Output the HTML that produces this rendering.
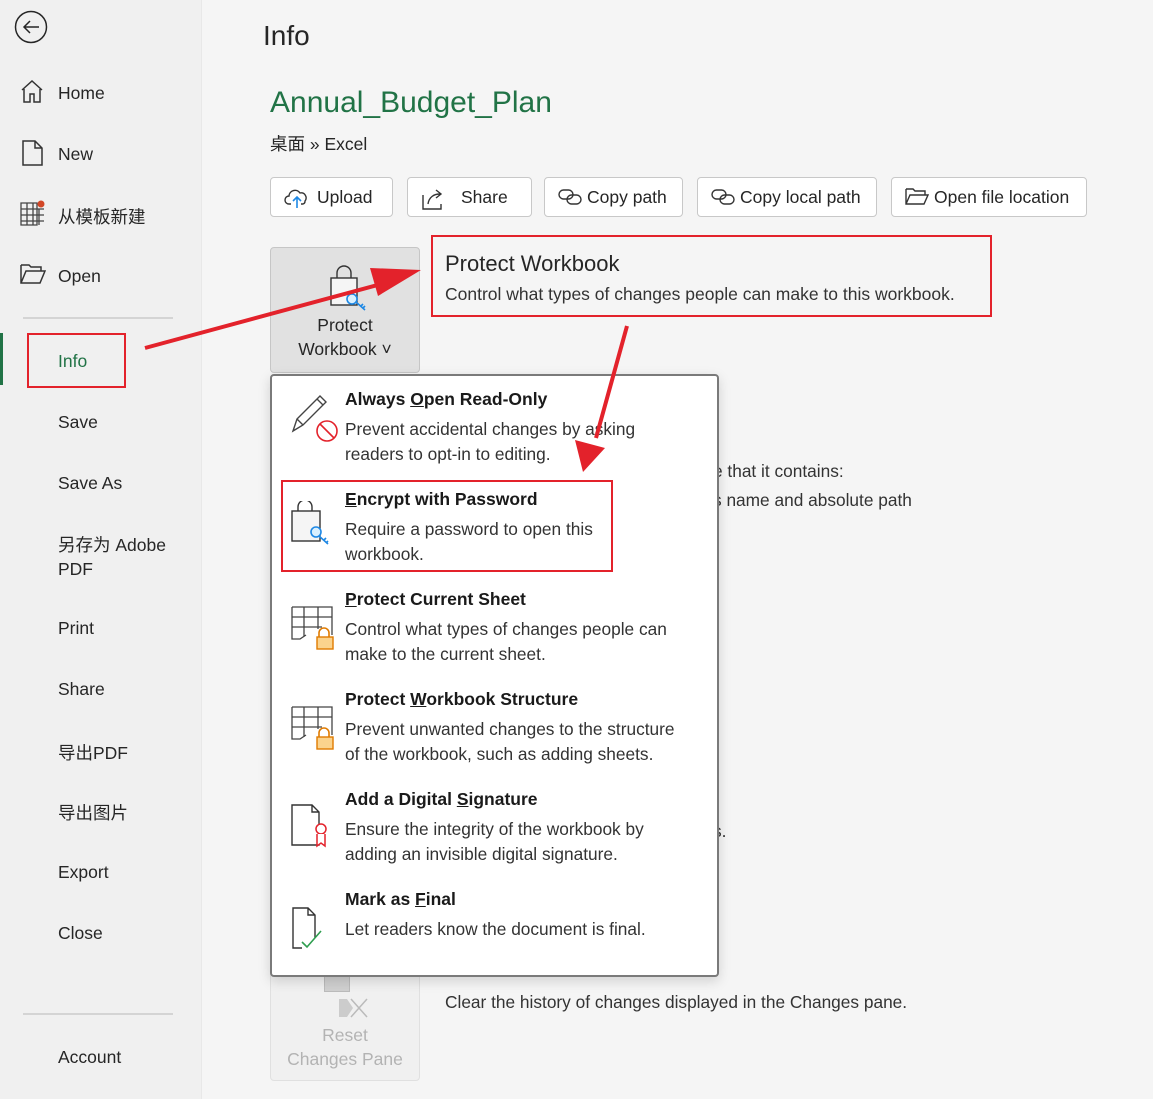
<!DOCTYPE html>
<html><head><meta charset="utf-8"><style>
*{margin:0;padding:0;box-sizing:border-box}
body{width:1153px;height:1099px;overflow:hidden;background:#f5f5f5;font-family:"Liberation Sans","Noto Sans CJK SC",sans-serif;color:#262626;position:relative}
.a{position:absolute;white-space:nowrap}
#side{position:absolute;left:0;top:0;width:202px;height:1099px;background:#f0f0f0;border-right:1px solid #e8e8e8}
.nav{position:absolute;left:58px;font-size:17.5px;color:#262626}
.btn{position:absolute;top:177px;height:40px;border:1px solid #c8c8c8;border-radius:4px;background:#fff;font-size:17.5px;line-height:38px;padding-left:46px;color:#262626}
.btn svg{position:absolute;left:13px;top:9px}
.mi{position:absolute;left:345px}
.mi b{display:block;font-size:17.5px;color:#1a1a1a;margin-bottom:7px}
.mi span{display:block;font-size:17.3px;line-height:25px;color:#333}
.mi svg{position:absolute;left:-55px;top:0}
</style></head><body>
<div id="side">
<svg class="a" style="left:14px;top:10px" width="34" height="34" viewBox="0 0 34 34"><circle cx="17" cy="17" r="15.5" fill="none" stroke="#262626" stroke-width="1.5"/><path d="M25 17H10M16 11l-6 6 6 6" fill="none" stroke="#262626" stroke-width="1.5"/></svg>
<svg class="a" style="left:20px;top:79px" width="24" height="25" viewBox="0 0 24 25"><path d="M2 11L12 2l10 9M4 10v13h6v-8h4v8h6V10" fill="none" stroke="#333" stroke-width="1.5"/></svg>
<div class="nav" style="top:83px">Home</div>
<svg class="a" style="left:22px;top:140px" width="22" height="26" viewBox="0 0 22 26"><path d="M1 1h12l7 7v17H1z M13 1v7h7" fill="none" stroke="#333" stroke-width="1.5"/></svg>
<div class="nav" style="top:144px">New</div>
<svg class="a" style="left:20px;top:200px" width="26" height="26" viewBox="0 0 26 26"><path d="M1 3h16v22H1zM1 9h23M1 15h23M1 21h23M7 3v22M13 3v22M19 9v16" fill="none" stroke="#444" stroke-width="1.3"/><circle cx="21" cy="4" r="3.5" fill="#d24726"/></svg>
<div class="nav" style="top:204px">从模板新建</div>
<svg class="a" style="left:20px;top:264px" width="26" height="20" viewBox="0 0 26 20"><path d="M1 1h8l2 2h10v4M1 1v18h19l5-12H6L1 19" fill="none" stroke="#333" stroke-width="1.5"/></svg>
<div class="nav" style="top:266px">Open</div>
<div class="a" style="left:23px;top:317px;width:150px;height:2px;background:#d4d4d4"></div>
<div class="a" style="left:0;top:333px;width:3px;height:52px;background:#217346"></div>
<div class="a" style="left:27px;top:333px;width:99px;height:55px;border:2px solid #e3222b"></div>
<div class="nav" style="top:351px;color:#217346">Info</div>
<div class="nav" style="top:412px">Save</div>
<div class="nav" style="top:473px">Save As</div>
<div class="nav" style="top:533px;line-height:24px">另存为 Adobe<br>PDF</div>
<div class="nav" style="top:618px">Print</div>
<div class="nav" style="top:679px">Share</div>
<div class="nav" style="top:740px">导出PDF</div>
<div class="nav" style="top:800px">导出图片</div>
<div class="nav" style="top:862px">Export</div>
<div class="nav" style="top:923px">Close</div>
<div class="a" style="left:23px;top:1013px;width:150px;height:2px;background:#d4d4d4"></div>
<div class="nav" style="top:1047px">Account</div>
</div>

<div class="a" style="left:263px;top:20px;font-size:28px;color:#262626">Info</div>
<div class="a" style="left:270px;top:86px;font-size:30px;color:#217346">Annual_Budget_Plan</div>
<div class="a" style="left:270px;top:131px;font-size:17.5px">桌面 » Excel</div>

<div class="btn" style="left:270px;width:123px"><svg width="26" height="22" viewBox="0 0 26 22"><path d="M7 17H5a4 4 0 0 1 0-8 6 6 0 0 1 11-3 5 5 0 0 1 5 8 3 3 0 0 1-2 3h-2" fill="none" stroke="#333" stroke-width="1.4"/><path d="M13 21v-10M9 14l4-4 4 4" fill="none" stroke="#1e88e5" stroke-width="1.6"/></svg>Upload</div>
<div class="btn" style="left:407px;width:125px;padding-left:53px"><svg width="24" height="24" viewBox="0 0 24 24"><path d="M2 8v14h18v-5M7 17c1-7 6-10 12-10M15 3l5 4-5 4" fill="none" stroke="#333" stroke-width="1.4"/></svg>Share</div>
<div class="btn" style="left:544px;width:139px;padding-left:42px"><svg width="26" height="20" viewBox="0 0 26 20"><rect x="1" y="3" width="14" height="9" rx="4.5" fill="none" stroke="#333" stroke-width="1.4"/><rect x="9" y="8" width="14" height="9" rx="4.5" fill="none" stroke="#333" stroke-width="1.4"/></svg>Copy path</div>
<div class="btn" style="left:697px;width:180px;padding-left:42px"><svg width="26" height="20" viewBox="0 0 26 20"><rect x="1" y="3" width="14" height="9" rx="4.5" fill="none" stroke="#333" stroke-width="1.4"/><rect x="9" y="8" width="14" height="9" rx="4.5" fill="none" stroke="#333" stroke-width="1.4"/></svg>Copy local path</div>
<div class="btn" style="left:891px;width:196px;padding-left:42px"><svg width="24" height="20" viewBox="0 0 24 20"><path d="M1 2h7l2 2h10v4M1 2v15h18l4-9H5L1 17" fill="none" stroke="#333" stroke-width="1.4"/></svg>Open file location</div>

<div class="a" style="left:270px;top:247px;width:150px;height:126px;background:#e1e1e1;border:1px solid #c6c6c6;border-radius:4px"></div>
<svg class="a" style="left:328px;top:264px" width="44" height="48" viewBox="0 0 44 48"><path d="M9 14V9a7 7 0 0 1 14 0v5" fill="none" stroke="#333" stroke-width="1.4"/><rect x="3" y="14" width="26" height="27" fill="#f5f5f5" stroke="#333" stroke-width="1.4"/><circle cx="24" cy="35" r="5" fill="#d9f0ff" stroke="#1e88e5" stroke-width="1.6"/><path d="M28 38l9 8M33 42l2-2M35 44l2-2" stroke="#1e88e5" stroke-width="1.6"/></svg>
<div class="a" style="left:270px;top:313px;width:150px;text-align:center;font-size:17.5px;line-height:24px;color:#262626">Protect<br>Workbook ˅</div>

<div class="a" style="left:431px;top:235px;width:561px;height:82px;border:2px solid #e3222b"></div>
<div class="a" style="left:445px;top:251px;font-size:22px;color:#262626">Protect Workbook</div>
<div class="a" style="left:445px;top:284px;font-size:17.5px;color:#333">Control what types of changes people can make to this workbook.</div>

<div class="a" style="left:713px;top:461px;font-size:17.3px;color:#333">e that it contains:</div>
<div class="a" style="left:713px;top:490px;font-size:17.3px;color:#333">s name and absolute path</div>
<div class="a" style="left:715px;top:636px;font-size:17.3px;color:#333">.</div>
<div class="a" style="left:713px;top:821px;font-size:17.3px;color:#333">s.</div>

<div class="a" style="left:270px;top:965px;width:150px;height:116px;background:#f0f0f0;border:1px solid #e0e0e0;border-radius:4px"></div>
<div class="a" style="left:324px;top:970px;width:26px;height:22px;background:#d0d0d0;border:1px solid #bbb"></div>
<svg class="a" style="left:337px;top:997px" width="34" height="22" viewBox="0 0 34 22"><path d="M2 2h8l6 9-6 9H2z" fill="#ccc"/><path d="M14 2l16 18M30 2L14 20" stroke="#bbb" stroke-width="1.5"/></svg>
<div class="a" style="left:270px;top:1023px;width:150px;text-align:center;font-size:17.5px;line-height:24px;color:#b3b3b3">Reset<br>Changes Pane</div>
<div class="a" style="left:445px;top:992px;font-size:17.3px;color:#333">Clear the history of changes displayed in the Changes pane.</div>

<div class="a" style="left:270px;top:374px;width:449px;height:603px;background:#fff;border:2px solid #7a7a7a;border-radius:4px;box-shadow:0 4px 12px rgba(0,0,0,.15)"></div>

<div class="mi" style="top:389px"><svg width="50" height="50" viewBox="0 0 50 50"><path d="M3 42l4-12L30 7l6 6-23 23zM7 30l6 6M27 10l6 6" fill="none" stroke="#444" stroke-width="1.4"/></svg><svg style="left:-30px;top:30px" width="26" height="26" viewBox="0 0 26 26"><circle cx="12" cy="12" r="10" fill="none" stroke="#e3222b" stroke-width="1.6"/><path d="M5 5l14 14" stroke="#e3222b" stroke-width="1.6"/></svg><b>Always <u>O</u>pen Read-Only</b><span>Prevent accidental changes by asking<br>readers to opt-in to editing.</span></div>
<div class="a" style="left:281px;top:480px;width:332px;height:92px;border:2px solid #e3222b"></div>
<div class="mi" style="top:489px"><svg style="top:12px" width="50" height="50" viewBox="0 0 50 50"><path d="M8 10V6a7 7 0 0 1 14 0v4" fill="none" stroke="#333" stroke-width="1.4"/><rect x="2" y="10" width="28" height="30" fill="#f5f5f5" stroke="#333" stroke-width="1.4"/><circle cx="26" cy="31" r="5" fill="#d9f0ff" stroke="#1e88e5" stroke-width="1.6"/><path d="M29 35l9 8M34 39l2-2M36 42l2-2" stroke="#1e88e5" stroke-width="1.6"/></svg><b><u>E</u>ncrypt with Password</b><span>Require a password to open this<br>workbook.</span></div>
<div class="mi" style="top:589px"><svg style="top:16px" width="50" height="50" viewBox="0 0 50 50"><path d="M2 2h40v28M2 2v32h8l6-4M2 12h40M2 22h30M14 2v30M28 2v22" fill="none" stroke="#444" stroke-width="1.3"/><path d="M29 32v-4a5 5 0 0 1 10 0v4" fill="none" stroke="#e07b00" stroke-width="1.6"/><rect x="27" y="32" width="16" height="12" fill="#fbd38d" stroke="#e07b00" stroke-width="1.4"/></svg><b><u>P</u>rotect Current Sheet</b><span>Control what types of changes people can<br>make to the current sheet.</span></div>
<div class="mi" style="top:689px"><svg style="top:16px" width="50" height="50" viewBox="0 0 50 50"><path d="M2 2h40v28M2 2v32h8l6-4M2 12h40M2 22h30M14 2v30M28 2v22" fill="none" stroke="#444" stroke-width="1.3"/><path d="M29 32v-4a5 5 0 0 1 10 0v4" fill="none" stroke="#e07b00" stroke-width="1.6"/><rect x="27" y="32" width="16" height="12" fill="#fbd38d" stroke="#e07b00" stroke-width="1.4"/></svg><b>Protect <u>W</u>orkbook Structure</b><span>Prevent unwanted changes to the structure<br>of the workbook, such as adding sheets.</span></div>
<div class="mi" style="top:789px"><svg style="top:14px" width="50" height="50" viewBox="0 0 50 50"><path d="M2 2h20l7 7v33H2zM22 2v7h7" fill="none" stroke="#333" stroke-width="1.4"/><circle cx="31" cy="26" r="5" fill="#fff" stroke="#e3222b" stroke-width="1.5"/><path d="M27 31v12l4-3 4 3V31" fill="#fff" stroke="#e3222b" stroke-width="1.5"/></svg><b>Add a Digital <u>S</u>ignature</b><span>Ensure the integrity of the workbook by<br>adding an invisible digital signature.</span></div>
<div class="mi" style="top:889px"><svg style="top:17px" width="50" height="50" viewBox="0 0 50 50"><path d="M25 32V9l-7-7H3v40h9M18 2v7h7" fill="none" stroke="#333" stroke-width="1.4"/><path d="M12 36l5 5 14-16" fill="none" stroke="#2e9e4f" stroke-width="1.6"/></svg><b>Mark as <u>F</u>inal</b><span>Let readers know the document is final.</span></div>

<svg class="a" style="left:0;top:0" width="1153" height="1099" viewBox="0 0 1153 1099">
<path d="M145 348L385 283" stroke="#e3222b" stroke-width="4"/>
<path d="M421 270L378 296 370 268z" fill="#e3222b"/>
<path d="M627 326L596 438" stroke="#e3222b" stroke-width="4"/>
<path d="M583 472L575 440 605 448z" fill="#e3222b"/>
</svg>
</body></html>
